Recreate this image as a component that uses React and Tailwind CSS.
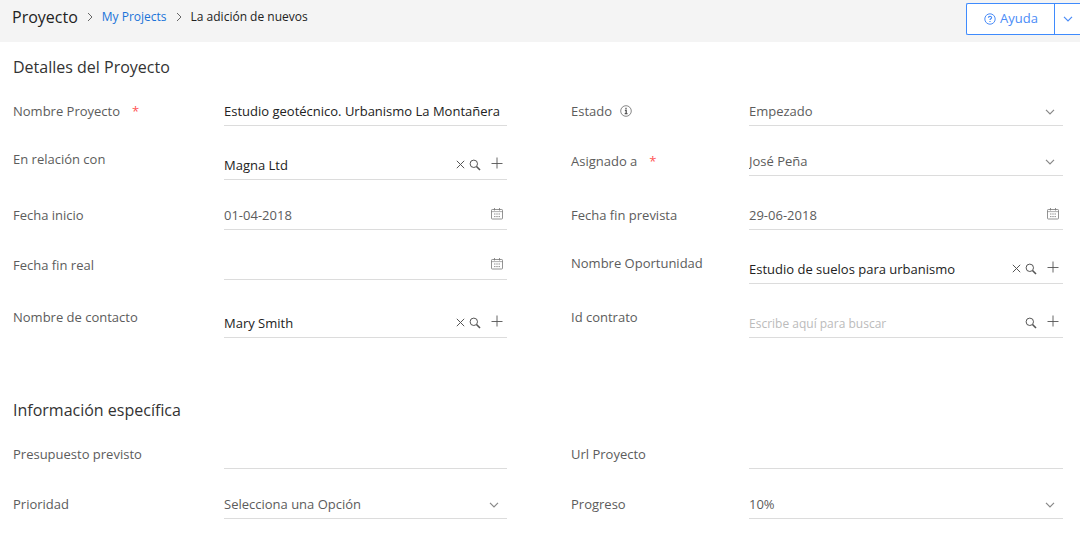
import React, { useState } from "react";

const iconBase = {
  fill: "none",
  stroke: "currentColor",
  "aria-hidden": true,
};

const ChevronDown = ({ className = "" }) => (
  <svg {...iconBase} viewBox="0 0 10 6" className={`w-[10px] h-[6px] ${className}`}>
    <path d="M1 0.8 L5 4.8 L9 0.8" strokeWidth="1.2" />
  </svg>
);

const ChevronRight = () => (
  <svg {...iconBase} viewBox="0 0 6 10" className="w-[6px] h-[10px] text-[#666]">
    <path d="M1 1 L5 5 L1 9" strokeWidth="1" />
  </svg>
);

const CloseIcon = () => (
  <svg {...iconBase} viewBox="0 0 9 9" className="w-[9px] h-[9px]">
    <path d="M0.8 0.8 L8.2 8.2 M8.2 0.8 L0.8 8.2" strokeWidth="1" />
  </svg>
);

const SearchIcon = () => (
  <svg {...iconBase} viewBox="0 0 12 12" className="w-3 h-3">
    <circle cx="4.8" cy="4.8" r="3.7" strokeWidth="1" />
    <path d="M7.5 7.5 L11 11" strokeWidth="1.6" />
  </svg>
);

const PlusIcon = () => (
  <svg {...iconBase} viewBox="0 0 12 12" className="w-3 h-3">
    <path d="M0.5 6.5 H11.5 M6 0.5 V11.5" strokeWidth="0.9" />
  </svg>
);

const CalendarIcon = () => (
  <svg {...iconBase} viewBox="0 0 12 12" className="w-3 h-3">
    <rect x="0.5" y="1.5" width="11" height="9.5" rx="0.8" strokeWidth="0.8" />
    <path d="M0.5 3.6 H11.5" strokeWidth="0.6" />
    <path d="M3.5 0 V2.5 M8.5 0 V2.5" strokeWidth="0.8" />
    <path d="M3.2 6 H4.4 M7.6 6 H8.8 M3.2 8.6 H4.4 M5.4 8.6 H6.6 M7.6 8.6 H8.8 M5.4 6 H6.6" strokeWidth="1" />
  </svg>
);

const InfoIcon = () => (
  <svg {...iconBase} viewBox="0 0 12 12" className="w-3 h-3 text-[#555]">
    <circle cx="6" cy="6" r="5.3" strokeWidth="0.7" />
    <path d="M6 2.8 V4.2 M4.9 5.3 H6.2 V8.8 M4.7 8.6 H7.5" strokeWidth="1.3" />
  </svg>
);

const HelpIcon = () => (
  <svg {...iconBase} viewBox="0 0 12 12" className="w-3 h-3">
    <circle cx="6" cy="6" r="5.2" strokeWidth="1" />
    <path d="M4.4 4.8 C4.4 2.8 7.6 2.8 7.6 4.7 C7.6 5.9 6 5.8 6 7.1 M6 7.9 V9.1" strokeWidth="1.2" />
  </svg>
);

const details = [
  { id: "nombre", label: "Nombre Proyecto", type: "text", value: "Estudio geotécnico. Urbanismo La Montañera", required: true },
  { id: "estado", label: "Estado", type: "select", value: "Empezado", info: true },
  { id: "relacion", label: "En relación con", type: "lookup", value: "Magna Ltd" },
  { id: "asignado", label: "Asignado a", type: "select", value: "José Peña", required: true },
  { id: "inicio", label: "Fecha inicio", type: "date", value: "01-04-2018" },
  { id: "finPrevista", label: "Fecha fin prevista", type: "date", value: "29-06-2018" },
  { id: "finReal", label: "Fecha fin real", type: "date", value: "" },
  { id: "oportunidad", label: "Nombre Oportunidad", type: "lookup", value: "Estudio de suelos para urbanismo" },
  { id: "contacto", label: "Nombre de contacto", type: "lookup", value: "Mary Smith" },
  { id: "contrato", label: "Id contrato", type: "lookup", value: "" },
];

const specific = [
  { id: "presupuesto", label: "Presupuesto previsto", type: "text", value: "" },
  { id: "url", label: "Url Proyecto", type: "text", value: "" },
  { id: "prioridad", label: "Prioridad", type: "select", value: "Selecciona una Opción" },
  { id: "progreso", label: "Progreso", type: "select", value: "10%" },
];

function Control({ field }) {
  const [value, setValue] = useState(field.value);
  const onChange = (e) => setValue(e.target.value);

  if (field.type === "select") {
    return (
      <div className="relative flex h-7 items-center border-b border-[#dcdcdc]">
        <select
          id={field.id}
          value={value}
          onChange={onChange}
          className="h-full w-full appearance-none bg-transparent text-[#5c5c5c] outline-none"
        >
          <option>{field.value}</option>
        </select>
        <ChevronDown className="pointer-events-none absolute right-2 top-[11px] text-[#888]" />
      </div>
    );
  }

  if (field.type === "lookup") {
    return (
      <div className="flex h-7 items-center border-b border-[#dcdcdc] pb-0.5 text-[#555]">
        <input
          id={field.id}
          value={value}
          onChange={onChange}
          placeholder="Escribe aquí para buscar"
          className="h-full min-w-0 flex-1 bg-transparent text-[#222] outline-none placeholder:text-xs placeholder:text-[#bbb]"
        />
        {value && (
          <button type="button" aria-label="Borrar" className="mr-1" onClick={() => setValue("")}>
            <CloseIcon />
          </button>
        )}
        <button type="button" aria-label="Buscar" className="mr-2.5">
          <SearchIcon />
        </button>
        <button type="button" aria-label="Añadir" className="mr-1 pb-1">
          <PlusIcon />
        </button>
      </div>
    );
  }

  return (
    <div className="flex h-7 items-center border-b border-[#dcdcdc] pb-0.5">
      <input
        id={field.id}
        value={value}
        onChange={onChange}
        className={`h-full min-w-0 flex-1 bg-transparent outline-none ${
          field.type === "date" ? "text-[#5c5c5c]" : "text-[#222]"
        }`}
      />
      {field.type === "date" && (
        <button type="button" aria-label="Abrir calendario" className="mr-1 pb-0.5 text-[#777]">
          <CalendarIcon />
        </button>
      )}
    </div>
  );
}

function Field({ field }) {
  const isLookup = field.type === "lookup";
  return (
    <div className="grid grid-cols-[211px_1fr] items-start even:grid-cols-[178px_1fr]">
      <div className={`flex items-center ${isLookup ? "pt-3" : "pt-3.5"}`}>
        <label htmlFor={field.id} className="leading-[22px] text-[#5c5c5c]">
          {field.label}
          {field.required && <span className="ml-3 text-[#f55]">*</span>}
        </label>
        {field.info && (
          <span className="ml-2">
            <InfoIcon />
          </span>
        )}
      </div>
      <div className={`pb-2.5 ${isLookup ? "pt-4" : "pt-3"}`}>
        <Control field={field} />
      </div>
    </div>
  );
}

function Section({ title, fields }) {
  return (
    <section className="pl-[13px] pr-[17px]">
      <h2 className="h-11 pt-3.5 text-base leading-[22px] text-[#333]">{title}</h2>
      <div className="grid grid-cols-[494fr_492fr] gap-x-16">
        {fields.map((field) => (
          <Field key={field.id} field={field} />
        ))}
      </div>
    </section>
  );
}

export default function App() {
  return (
    <div className="min-h-screen bg-white font-['Open_Sans',sans-serif] text-[13px]">
      <header className="flex h-[42px] items-start justify-between bg-[#f4f4f4] pl-3">
        <nav className="flex items-center gap-[9px] pt-[5px] text-xs">
          <h1 className="text-base text-[#222]">Proyecto</h1>
          <ChevronRight />
          <a href="#projects" className="text-[#1a73d9]">My Projects</a>
          <ChevronRight />
          <span className="text-[#222]">La adición de nuevos</span>
        </nav>
        <div className="mt-[3px] flex h-8 border border-r-0 border-[#3f8bfd] bg-white text-[#4a8cf7] rounded-l-xs">
          <button type="button" className="flex items-center gap-1 pl-[17px] pr-4">
            <HelpIcon />
            Ayuda
          </button>
          <button type="button" aria-label="Más ayuda" className="border-l border-[#3f8bfd] pl-2 pr-[7px]">
            <ChevronDown />
          </button>
        </div>
      </header>
      <form className="flex flex-col gap-[37px]" onSubmit={(e) => e.preventDefault()}>
        <Section title="Detalles del Proyecto" fields={details} />
        <Section title="Información específica" fields={specific} />
      </form>
    </div>
  );
}
